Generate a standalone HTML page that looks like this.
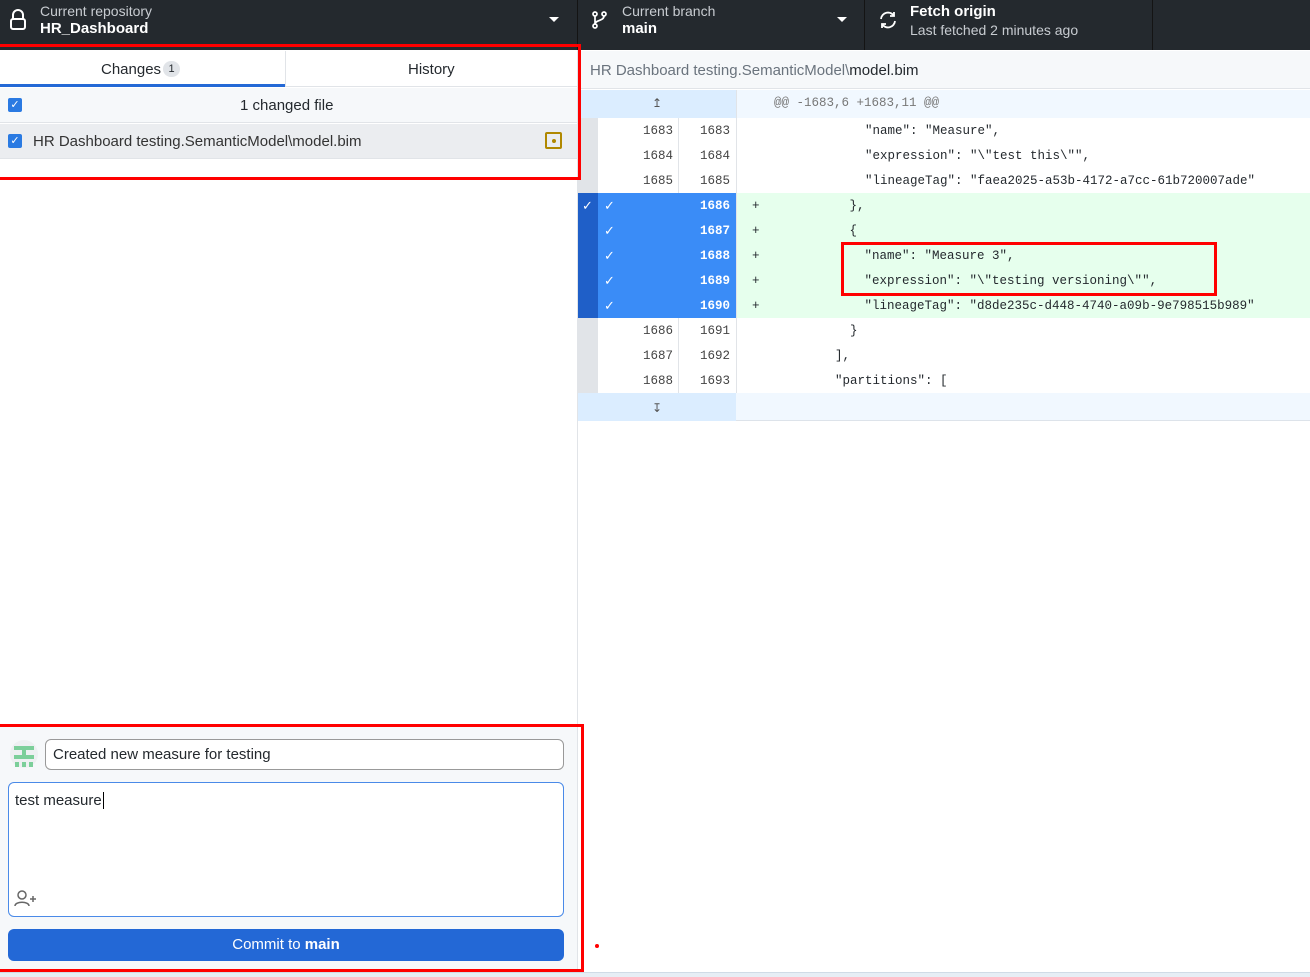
<!DOCTYPE html>
<html><head><meta charset="utf-8"><style>
*{box-sizing:border-box;margin:0;padding:0}
body{width:1310px;height:977px;overflow:hidden;background:#fff;font-family:"Liberation Sans",sans-serif;position:relative;color:#24292e}
.abs{position:absolute}
.hdr{left:0;top:0;width:1310px;height:50px;background:#24292e}
.sep{top:0;width:1px;height:50px;background:#141414}
.t1{font-size:14px;color:#c8ccd1}
.t2{font-size:15px;color:#fff;font-weight:bold}
.mono{font-family:"Liberation Mono",monospace;font-size:12.5px;white-space:pre;color:#24292e}
.ln{font-family:"Liberation Mono",monospace;font-size:12.5px;text-align:right;color:#444}
.chk{color:#fff;font-size:13px}
.red{z-index:10}
</style></head><body>
<div class="abs hdr"></div>
<svg class="abs" style="left:9px;top:9px" width="18" height="22" viewBox="0 0 18 22"><path d="M4 10V6a5 5 0 0 1 10 0v4" fill="none" stroke="#fff" stroke-width="2"/><rect x="2" y="10" width="14" height="10" rx="2" fill="none" stroke="#fff" stroke-width="2"/></svg>
<div class="abs t1" style="left:40px;top:3px">Current repository</div>
<div class="abs t2" style="left:40px;top:20px">HR_Dashboard</div>
<div class="abs" style="left:549px;top:17px;border:5px solid transparent;border-top:5px solid #fff;border-bottom:0"></div>
<div class="abs sep" style="left:577px"></div>
<svg class="abs" style="left:591px;top:10px" width="18" height="20" viewBox="0 0 18 20"><circle cx="4" cy="4" r="2" fill="none" stroke="#fff" stroke-width="1.7"/><circle cx="13" cy="4" r="2" fill="none" stroke="#fff" stroke-width="1.7"/><circle cx="4" cy="16" r="2" fill="none" stroke="#fff" stroke-width="1.7"/><path d="M4 6v8M13 6c0 5-9 4-9 8" fill="none" stroke="#fff" stroke-width="1.7"/></svg>
<div class="abs t1" style="left:622px;top:3px">Current branch</div>
<div class="abs t2" style="left:622px;top:20px">main</div>
<div class="abs" style="left:837px;top:17px;border:5px solid transparent;border-top:5px solid #fff;border-bottom:0"></div>
<div class="abs sep" style="left:864px"></div>
<svg class="abs" style="left:877px;top:9px" width="22" height="22" viewBox="0 0 22 22"><path d="M4 10a7 7 0 0 1 13-3M18 12a7 7 0 0 1-13 3" fill="none" stroke="#fff" stroke-width="1.8"/><path d="M17 3v4h-4M5 19v-4h4" fill="none" stroke="#fff" stroke-width="1.8"/></svg>
<div class="abs t2" style="left:910px;top:3px">Fetch origin</div>
<div class="abs t1" style="left:910px;top:22px">Last fetched 2 minutes ago</div>
<div class="abs sep" style="left:1152px"></div>

<div class="abs" style="left:577px;top:50px;width:1px;height:927px;background:#e1e4e8"></div>
<div class="abs" style="left:0;top:51px;width:577px;height:36px;border-bottom:1px solid #e1e4e8"></div>
<div class="abs" style="left:285px;top:51px;width:1px;height:36px;background:#e1e4e8"></div>
<div class="abs" style="left:0;top:84px;width:285px;height:3px;background:#2469d6"></div>
<div class="abs" style="left:101px;top:61px;font-size:15px">Changes</div>
<div class="abs" style="left:163px;top:61px;width:17px;height:16px;border-radius:8px;background:#e1e4e8;font-size:11px;text-align:center;line-height:16px">1</div>
<div class="abs" style="left:408px;top:61px;font-size:15px">History</div>
<div class="abs" style="left:0;top:88px;width:577px;height:35px;background:#f6f8fa;border-bottom:1px solid #e1e4e8"></div>
<div class="abs" style="left:8px;top:98px;width:14px;height:14px;background:#2a7ae2;border-radius:2px;color:#fff;font-size:11px;text-align:center;line-height:14px">✓</div>
<div class="abs" style="left:240px;top:97px;font-size:15px">1 changed file</div>
<div class="abs" style="left:0;top:124px;width:577px;height:35px;background:#ebedf0;border-bottom:1px solid #e1e4e8"></div>
<div class="abs" style="left:8px;top:134px;width:14px;height:14px;background:#2a7ae2;border-radius:2px;color:#fff;font-size:11px;text-align:center;line-height:14px">✓</div>
<div class="abs" style="left:33px;top:133px;font-size:15px;color:#333">HR Dashboard testing.SemanticModel\model.bim</div>
<div class="abs" style="left:545px;top:132px;width:17px;height:17px;border:2px solid #b08800;border-radius:2px"><div class="abs" style="left:4.5px;top:4.5px;width:4px;height:4px;border-radius:2px;background:#b08800"></div></div>

<div class="abs" style="left:0;top:726px;width:577px;height:246px;background:#f6f8fa"></div>
<svg class="abs" style="left:10px;top:740px" width="28" height="28" viewBox="0 0 28 28"><circle cx="14" cy="14" r="14" fill="#eef0f2"/><rect x="4" y="6" width="20" height="4" fill="#7ccf9a"/><rect x="12" y="10" width="4" height="6" fill="#7ccf9a"/><rect x="4" y="15" width="20" height="4" fill="#7ccf9a"/><rect x="5" y="22" width="4" height="5" fill="#7ccf9a"/><rect x="12" y="22" width="4" height="5" fill="#7ccf9a"/><rect x="19" y="22" width="4" height="5" fill="#7ccf9a"/></svg>
<div class="abs" style="left:45px;top:739px;width:519px;height:31px;background:#fff;border:1px solid #999;border-radius:6px;font-size:15px;padding:6px 7px">Created new measure for testing</div>
<div class="abs" style="left:8px;top:782px;width:556px;height:135px;background:#fff;border:1px solid #4a8ae8;border-radius:6px;font-size:15px;padding:9px 6px">test measure<span style="border-left:1px solid #000;margin-left:1px"></span></div>
<svg class="abs" style="left:14px;top:889px" width="24" height="18" viewBox="0 0 24 18"><circle cx="8" cy="6" r="4" fill="none" stroke="#666" stroke-width="1.5"/><path d="M1 17c0-5 14-5 14 0" fill="none" stroke="#666" stroke-width="1.5"/><path d="M19 7v6M16 10h6" stroke="#666" stroke-width="1.5"/></svg>
<div class="abs" style="left:8px;top:929px;width:556px;height:32px;background:#2368d6;border-radius:6px;color:#fff;font-size:15px;text-align:center;line-height:32px">Commit to <b>main</b></div>
<div class="abs" style="left:595px;top:944px;width:4px;height:4px;border-radius:2px;background:#f00"></div>
<div class="abs" style="left:0;top:972px;width:1310px;height:5px;background:#e6eef5;border-top:1px solid #cfdbe6"></div>

<div class="abs" style="left:578px;top:51px;width:732px;height:38px;background:#f6f8fa;border-bottom:1px solid #e1e4e8"></div>
<div class="abs" style="left:590px;top:62px;font-size:15px;color:#6a737d">HR Dashboard testing.SemanticModel\<span style="color:#24292e">model.bim</span></div>
<div class="abs" style="left:578px;top:90px;width:732px;height:28px;background:#f1f8ff"></div>
<div class="abs" style="left:578px;top:90px;width:158px;height:28px;background:#dbedff;color:#555;font-size:12px;text-align:center;line-height:26px">↥</div>
<div class="abs mono" style="left:774px;top:96px;color:#777">@@ -1683,6 +1683,11 @@</div>

<div class="abs" style="left:578px;top:118px;width:20px;height:75px;background:#e1e4e8"></div>
<div class="abs" style="left:678px;top:118px;width:1px;height:275px;background:#e1e4e8"></div>
<div class="abs" style="left:736px;top:90px;width:1px;height:303px;background:#e1e4e8"></div>
<div class="abs" style="left:578px;top:193px;width:20px;height:125px;background:#1f5fc8"></div>
<div class="abs" style="left:598px;top:193px;width:138px;height:125px;background:#3a8cf7"></div>
<div class="abs" style="left:737px;top:193px;width:573px;height:125px;background:#e6ffed"></div>
<div class="abs" style="left:578px;top:318px;width:20px;height:75px;background:#e1e4e8"></div>

<div class="abs ln" style="left:600px;top:124px;width:73px">1683</div><div class="abs ln" style="left:680px;top:124px;width:50px">1683</div><div class="abs mono" style="left:865px;top:124px">"name": "Measure",</div>
<div class="abs ln" style="left:600px;top:149px;width:73px">1684</div><div class="abs ln" style="left:680px;top:149px;width:50px">1684</div><div class="abs mono" style="left:865px;top:149px">"expression": "\"test this\"",</div>
<div class="abs ln" style="left:600px;top:174px;width:73px">1685</div><div class="abs ln" style="left:680px;top:174px;width:50px">1685</div><div class="abs mono" style="left:865px;top:174px">"lineageTag": "faea2025-a53b-4172-a7cc-61b720007ade"</div>

<div class="abs chk" style="left:582px;top:198px">✓</div>
<div class="abs chk" style="left:604px;top:198px">✓</div><div class="abs ln" style="left:680px;top:199px;width:50px;color:#fff;font-weight:bold">1686</div><div class="abs mono" style="left:752px;top:199px">+            },</div>
<div class="abs chk" style="left:604px;top:223px">✓</div><div class="abs ln" style="left:680px;top:224px;width:50px;color:#fff;font-weight:bold">1687</div><div class="abs mono" style="left:752px;top:224px">+            {</div>
<div class="abs chk" style="left:604px;top:248px">✓</div><div class="abs ln" style="left:680px;top:249px;width:50px;color:#fff;font-weight:bold">1688</div><div class="abs mono" style="left:752px;top:249px">+              "name": "Measure 3",</div>
<div class="abs chk" style="left:604px;top:273px">✓</div><div class="abs ln" style="left:680px;top:274px;width:50px;color:#fff;font-weight:bold">1689</div><div class="abs mono" style="left:752px;top:274px">+              "expression": "\"testing versioning\"",</div>
<div class="abs chk" style="left:604px;top:298px">✓</div><div class="abs ln" style="left:680px;top:299px;width:50px;color:#fff;font-weight:bold">1690</div><div class="abs mono" style="left:752px;top:299px">+              "lineageTag": "d8de235c-d448-4740-a09b-9e798515b989"</div>

<div class="abs ln" style="left:600px;top:324px;width:73px">1686</div><div class="abs ln" style="left:680px;top:324px;width:50px">1691</div><div class="abs mono" style="left:850px;top:324px">}</div>
<div class="abs ln" style="left:600px;top:349px;width:73px">1687</div><div class="abs ln" style="left:680px;top:349px;width:50px">1692</div><div class="abs mono" style="left:835px;top:349px">],</div>
<div class="abs ln" style="left:600px;top:374px;width:73px">1688</div><div class="abs ln" style="left:680px;top:374px;width:50px">1693</div><div class="abs mono" style="left:835px;top:374px">"partitions": [</div>

<div class="abs" style="left:578px;top:393px;width:732px;height:28px;background:#f1f8ff;border-bottom:1px solid #dde3ea"></div>
<div class="abs" style="left:578px;top:393px;width:158px;height:28px;background:#dbedff;color:#555;font-size:12px;text-align:center;line-height:30px">↧</div>

<div class="abs red" style="left:-3px;top:44px;width:584px;height:136px;border:3px solid #f00"></div>
<div class="abs red" style="left:-3px;top:724px;width:587px;height:248px;border:3px solid #f00"></div>
<div class="abs red" style="left:841px;top:242px;width:376px;height:54px;border:3px solid #f00"></div>
</body></html>
